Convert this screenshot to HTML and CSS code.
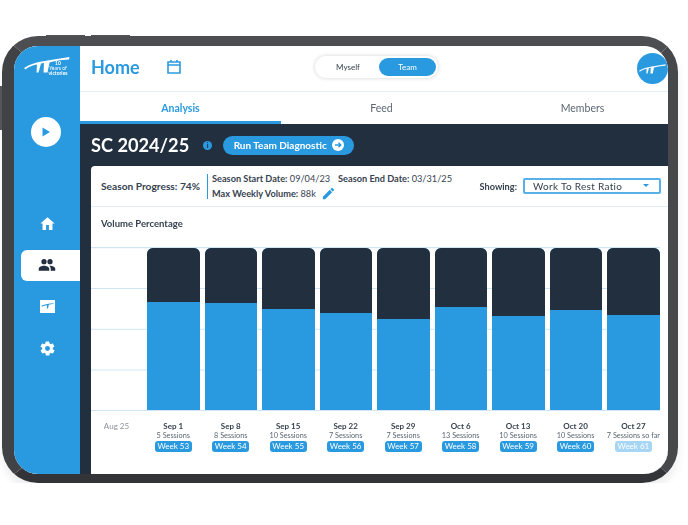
FILE: index.html
```html
<!DOCTYPE html>
<html lang="en">
<head>
    <meta charset="UTF-8">
    <title>Home</title>
    <link rel="stylesheet" href="styles.css">
</head>
<body>
    <div class="device">
        <div class="screen">
            <aside class="sidebar">
                <div class="logo">
                    <svg class="logo-mark" viewBox="0 0 46 16" width="46" height="16"><path d="M0 11C6 7 14 5 22 3.800L45.500 0L45 2.500C36 3 30 4 25.500 5.500L23.500 15.500H19.500L20 6L17 6.500L14.500 15.500H12.500L13 7.500C8 8.500 4 10 1.500 12.500Z" fill="#fff"/></svg>
                    <div class="logo-text"><b>10</b><span>Years of</span><b>victories</b></div>
                </div>
                <button class="play">
                    <svg viewBox="0 0 10 10" width="10" height="10"><path d="M1.500 0.500L9 5L1.500 9.500Z" fill="#2a9ae0"/></svg>
                </button>
                <nav class="nav">
                    <a class="nav-item">
                        <svg viewBox="0 0 24 24" width="17" height="17"><path d="M10 21v-7h4v7h5v-9h3L12 3 2 12h3v9z" fill="#fff"/></svg>
                    </a>
                    <a class="nav-item active">
                        <svg viewBox="0 0 24 24" width="18" height="18"><path d="M8 11a3.500 3.500 0 1 0 0-7 3.500 3.500 0 0 0 0 7zm8 0a3.500 3.500 0 1 0 0-7 3.500 3.500 0 0 0 0 7zM8 13c-3 0-7 1.300-7 4v2.500h14V17c0-2.700-4-4-7-4zm8 0h-1.200c1.500 1 2.200 2.400 2.200 4v2.500h6V17c0-2.700-4-4-7-4z" fill="#222f3f"/></svg>
                    </a>
                    <a class="nav-item">
                        <svg viewBox="0 0 15 13" width="15" height="13"><path d="M0 0H15V13H0Z" fill="#fff"/><path d="M1.500 5.500C5 4.300 9 3.600 13.500 3.300L13.400 4.100C11.500 4.200 10 4.500 8.800 4.800L8 8.500H6.800L7 5.200C5.400 5.500 3.800 6 2 6.500Z" fill="#2a9ae0"/></svg>
                    </a>
                    <a class="nav-item">
                        <svg viewBox="0 0 24 24" width="17" height="17"><path d="M19.400 13c0-.3.100-.7.100-1s0-.7-.1-1l2.100-1.600c.2-.2.200-.4.100-.6l-2-3.500c-.1-.2-.4-.3-.6-.2l-2.500 1c-.5-.4-1.100-.7-1.700-1l-.4-2.600c0-.3-.2-.5-.5-.5h-4c-.3 0-.5.200-.5.400l-.4 2.700c-.6.200-1.100.6-1.700 1l-2.500-1c-.2-.1-.5 0-.6.200l-2 3.500c-.1.200-.1.500.1.600L4.600 11c0 .3-.1.700-.1 1s0 .7.1 1l-2.100 1.600c-.2.200-.2.400-.1.600l2 3.500c.1.200.4.300.6.200l2.500-1c.5.400 1.100.7 1.700 1l.4 2.600c0 .3.200.5.500.5h4c.3 0 .5-.2.500-.4l.4-2.700c.6-.2 1.100-.6 1.700-1l2.500 1c.2.100.5 0 .6-.2l2-3.500c.1-.2.100-.5-.1-.6zM12 15.500a3.500 3.500 0 1 1 0-7 3.500 3.500 0 0 1 0 7z" fill="#fff"/></svg>
                    </a>
                </nav>
            </aside>

            <main class="main">
                <header class="topbar">
                    <h1 class="page-title">Home</h1>
                    <svg class="calendar" viewBox="0 0 14 15" width="14" height="15"><path d="M1 3H13V14H1ZM1 6H13M4 1V3M10 1V3" fill="none" stroke="#2a9ae0" stroke-width="1.600"/></svg>
                    <div class="toggle">
                        <span class="toggle-item">Myself</span>
                        <span class="toggle-item on">Team</span>
                    </div>
                    <div class="avatar">
                        <svg viewBox="0 0 46 16" width="27" height="10"><path d="M0 11C6 7 14 5 22 3.800L45.500 0L45 2.500C36 3 30 4 25.500 5.500L23.500 15.500H19.500L20 6L17 6.500L14.500 15.500H12.500L13 7.500C8 8.500 4 10 1.500 12.500Z" fill="#fff"/></svg>
                    </div>
                </header>

                <div class="tabs">
                    <a class="tab active">Analysis</a>
                    <a class="tab">Feed</a>
                    <a class="tab">Members</a>
                </div>

                <section class="panel">
                    <div class="panel-head">
                        <h2 class="season">SC 2024/25</h2>
                        <span class="info">i</span>
                        <button class="run">Run Team Diagnostic
                            <svg viewBox="0 0 12 12" width="12" height="12"><circle cx="6" cy="6" r="6" fill="#fff"/><path d="M3 6H8.500M6.500 3.800L8.800 6L6.500 8.200" fill="none" stroke="#2a9ae0" stroke-width="1.400"/></svg>
                        </button>
                    </div>

                    <div class="card">
                        <div class="stats">
                            <div class="progress">Season Progress: 74%</div>
                            <div class="dates">
                                <div class="dates-row">
                                    <span><b>Season Start Date:</b> 09/04/23</span>
                                    <span><b>Season End Date:</b> 03/31/25</span>
                                </div>
                                <div class="dates-row">
                                    <span><b>Max Weekly Volume:</b> 88k</span>
                                    <svg class="pencil" viewBox="0 0 24 24" width="15" height="15"><path d="M3 17.250V21h3.750L17.800 9.940l-3.750-3.750zM20.700 7.040a1 1 0 0 0 0-1.410l-2.340-2.340a1 1 0 0 0-1.410 0l-1.830 1.830 3.750 3.750z" fill="#2a9ae0"/></svg>
                                </div>
                            </div>
                            <div class="showing">
                                <b>Showing:</b>
                                <div class="select">Work To Rest Ratio<i class="caret"></i></div>
                            </div>
                        </div>

                        <div class="chart-title">Volume Percentage</div>

                        <div class="chart">
                            <div class="slot"></div>
                            <div class="slot"><div class="bar"><div class="rest" style="height:54px"></div></div></div>
                            <div class="slot"><div class="bar"><div class="rest" style="height:55px"></div></div></div>
                            <div class="slot"><div class="bar"><div class="rest" style="height:61px"></div></div></div>
                            <div class="slot"><div class="bar"><div class="rest" style="height:65px"></div></div></div>
                            <div class="slot"><div class="bar"><div class="rest" style="height:71px"></div></div></div>
                            <div class="slot"><div class="bar"><div class="rest" style="height:59px"></div></div></div>
                            <div class="slot"><div class="bar"><div class="rest" style="height:68px"></div></div></div>
                            <div class="slot"><div class="bar"><div class="rest" style="height:62px"></div></div></div>
                            <div class="slot"><div class="bar"><div class="rest" style="height:67px"></div></div></div>
                        </div>

                        <div class="labels">
                            <div class="label"><span class="date muted">Aug 25</span></div>
                            <div class="label"><span class="date">Sep 1</span><span class="count">5 Sessions</span><span class="week">Week 53</span></div>
                            <div class="label"><span class="date">Sep 8</span><span class="count">8 Sessions</span><span class="week">Week 54</span></div>
                            <div class="label"><span class="date">Sep 15</span><span class="count">10 Sessions</span><span class="week">Week 55</span></div>
                            <div class="label"><span class="date">Sep 22</span><span class="count">7 Sessions</span><span class="week">Week 56</span></div>
                            <div class="label"><span class="date">Sep 29</span><span class="count">7 Sessions</span><span class="week">Week 57</span></div>
                            <div class="label"><span class="date">Oct 6</span><span class="count">13 Sessions</span><span class="week">Week 58</span></div>
                            <div class="label"><span class="date">Oct 13</span><span class="count">10 Sessions</span><span class="week">Week 59</span></div>
                            <div class="label"><span class="date">Oct 20</span><span class="count">10 Sessions</span><span class="week">Week 60</span></div>
                            <div class="label"><span class="date">Oct 27</span><span class="count">7 Sessions so far</span><span class="week faded">Week 61</span></div>
                        </div>
                    </div>
                </section>
            </main>
        </div>
    </div>
</body>
</html>
```

FILE: styles.css
```css
*{
    box-sizing: border-box;
}
body{
    margin: 0;
    background-color: white;
    font-family: "Lato", "Noto Sans", sans-serif;
    color: #36424f;
}
h1,h2{
    margin: 0;
}
button{
    font-family: inherit;
    border: none;
    padding: 0;
}

/* tablet frame */
.device{
    position: relative;
    width: 676px;
    height: 447px;
    margin: 36px 0 0 2px;
    border-style: solid;
    border-color: #4d4e52 #47484c #333438 #414246;
    border-width: 10px 10px 9px 12px;
    border-radius: 36px;
    box-shadow: 0 7px 10px rgba(0,0,0,.07);
    filter: blur(.35px);
}
.device::before{
    content: "";
    position: absolute;
    top: -11px;
    left: 32px;
    width: 39px;
    height: 1px;
    background-color: #55565a;
    box-shadow: 45px 0 #55565a;
}
.device::after{
    content: "";
    position: absolute;
    top: 40px;
    left: -14px;
    width: 2px;
    height: 44px;
    background-color: #55565a;
}
.screen{
    display: flex;
    height: 100%;
    border-radius: 24px;
    overflow: hidden;
    background-color: white;
}

/* left blue bar */
.sidebar{
    flex: 0 0 66px;
    background-color: #2a9ae0;
    display: flex;
    flex-direction: column;
    padding: 9px 0 0 7px;
}
.logo{
    height: 20px;
    padding: 2px 0 0 3px;
    position: relative;
}
.logo-mark{
    display: block;
}
.logo-text{
    position: absolute;
    left: 27px;
    top: 6px;
    width: 20px;
    display: flex;
    flex-direction: column;
    align-items: center;
    color: white;
    font-size: 5px;
    line-height: 5px;
    white-space: nowrap;
}
.play{
    width: 30px;
    height: 30px;
    border-radius: 50%;
    background-color: white;
    margin: 42px 0 0 10px;
    display: flex;
    align-items: center;
    justify-content: center;
}
.nav{
    display: flex;
    flex-direction: column;
    gap: 10.5px;
    margin-top: 61px;
}
.nav-item{
    height: 31px;
    display: flex;
    align-items: center;
    justify-content: center;
    padding-right: 7px;
}
.nav-item.active{
    background-color: white;
    border-radius: 6px 0 0 6px;
    padding-right: 8px;
}

/* right side */
.main{
    flex: 1;
    min-width: 0;
    display: flex;
    flex-direction: column;
}
.topbar{
    height: 46px;
    flex: none;
    display: flex;
    align-items: center;
    padding: 0 0 4px 11px;
    border-bottom: 1px solid #e3eff8;
    position: relative;
}
.page-title{
    font-size: 18px;
    font-weight: 700;
    color: #2a9ae0;
    width: 76px;
}
.toggle{
    display: flex;
    width: 123px;
    height: 22px;
    padding: 2px;
    margin-left: 134px;
    background-color: white;
    border-radius: 11px;
    box-shadow: 0 0 4px rgba(0,0,0,.18);
}
.toggle-item{
    flex: 1;
    font-size: 8px;
    line-height: 18px;
    text-align: center;
    border-radius: 9px;
}
.toggle-item.on{
    flex: 0 0 57px;
    background-color: #2a9ae0;
    color: white;
}
.avatar{
    position: absolute;
    top: 7px;
    right: 0;
    width: 31px;
    height: 31px;
    border-radius: 50%;
    background-color: #2a9ae0;
    display: flex;
    align-items: center;
    justify-content: center;
}
.tabs{
    flex: none;
    display: grid;
    grid-template-columns: repeat(3, 201px);
    grid-auto-rows: 32px;
    height: 32px;
}
.tab{
    font-size: 10.500px;
    line-height: 33px;
    text-align: center;
    color: #5b6672;
}
.tab.active{
    color: #2a9ae0;
    font-weight: 700;
    border-bottom: 3px solid #2a9ae0;
}

/* dark area */
.panel{
    flex: 1;
    min-height: 0;
    background-color: #222f3f;
    padding-left: 11px;
    display: flex;
    flex-direction: column;
}
.panel-head{
    height: 42px;
    flex: none;
    display: flex;
    align-items: center;
}
.season{
    font-size: 18.200px;
    font-weight: 700;
    color: white;
}
.info{
    width: 9px;
    height: 9px;
    border-radius: 50%;
    background-color: #2a9ae0;
    color: #222f3f;
    font-size: 7px;
    line-height: 9px;
    font-weight: 700;
    text-align: center;
    margin-left: 14px;
}
.run{
    height: 19px;
    width: 131px;
    margin-left: 11px;
    border-radius: 10px;
    background-color: #2a9ae0;
    color: white;
    font-size: 10px;
    font-weight: 700;
    display: flex;
    align-items: center;
    justify-content: center;
    gap: 5px;
}

/* white card */
.card{
    flex: 1;
    min-height: 0;
    background-color: white;
    border-radius: 4px 0 0 0;
}
.stats{
    height: 41px;
    display: flex;
    align-items: center;
    padding: 0 7px 0 10px;
    border-bottom: 1px solid #e3eff8;
    font-size: 9.200px;
    white-space: nowrap;
}
.stats b{
    font-weight: 700;
}
.progress{
    width: 106px;
    font-size: 10.200px;
    font-weight: 700;
}
.dates{
    border-left: 1px solid #2a9ae0;
    padding-left: 4px;
    display: flex;
    flex-direction: column;
    gap: 5px;
    line-height: 10px;
}
.dates-row{
    display: flex;
    align-items: center;
    gap: 8px;
    height: 10px;
}
.pencil{
    flex: none;
    margin-left: -3px;
}
.showing{
    margin-left: auto;
    display: flex;
    align-items: center;
    gap: 6px;
}
.select{
    width: 138px;
    height: 16px;
    border: 2px solid #58b0e8;
    border-radius: 2px;
    padding-left: 8px;
    font-size: 10px;
    line-height: 12px;
    letter-spacing: .3px;
    position: relative;
}
.caret{
    position: absolute;
    right: 10px;
    top: 4px;
    border-left: 3px solid transparent;
    border-right: 3px solid transparent;
    border-top: 3px solid #2a9ae0;
}
.chart-title{
    height: 41px;
    padding: 10px 0 0 10px;
    font-size: 9.500px;
    font-weight: 700;
    line-height: 14px;
}
.chart,.labels{
    display: grid;
    grid-template-columns: 51px repeat(9, 1fr);
    column-gap: 5px;
    width: 569px;
}
.chart{
    height: 164px;
    margin-top: -1px;
    border-top: 1px solid #cfe6f7;
    border-bottom: 1px solid #cfe6f7;
    background-image: linear-gradient(#cfe6f7 1px, transparent 1px);
    background-size: 100% 40.750px;
    background-position: 0 40px;
}
.slot{
    height: 162px;
}
.bar{
    height: 100%;
    background-color: #2a9ae0;
    border-radius: 6px 6px 0 0;
    overflow: hidden;
}
.rest{
    background-color: #222f3f;
}
.labels{
    padding-top: 10px;
}
.label{
    display: flex;
    flex-direction: column;
    align-items: center;
    font-size: 8px;
    line-height: 10px;
    white-space: nowrap;
}
.date{
    font-weight: 700;
}
.date.muted{
    font-weight: 400;
    color: #8b929a;
}
.count{
    color: #5b6672;
    font-size: 7.300px;
}
.week{
    width: 37px;
    height: 11px;
    border-radius: 3px;
    background-color: #2a9ae0;
    color: white;
    line-height: 11px;
    text-align: center;
}
.week.faded{
    background-color: #a6d6f3;
}
```
